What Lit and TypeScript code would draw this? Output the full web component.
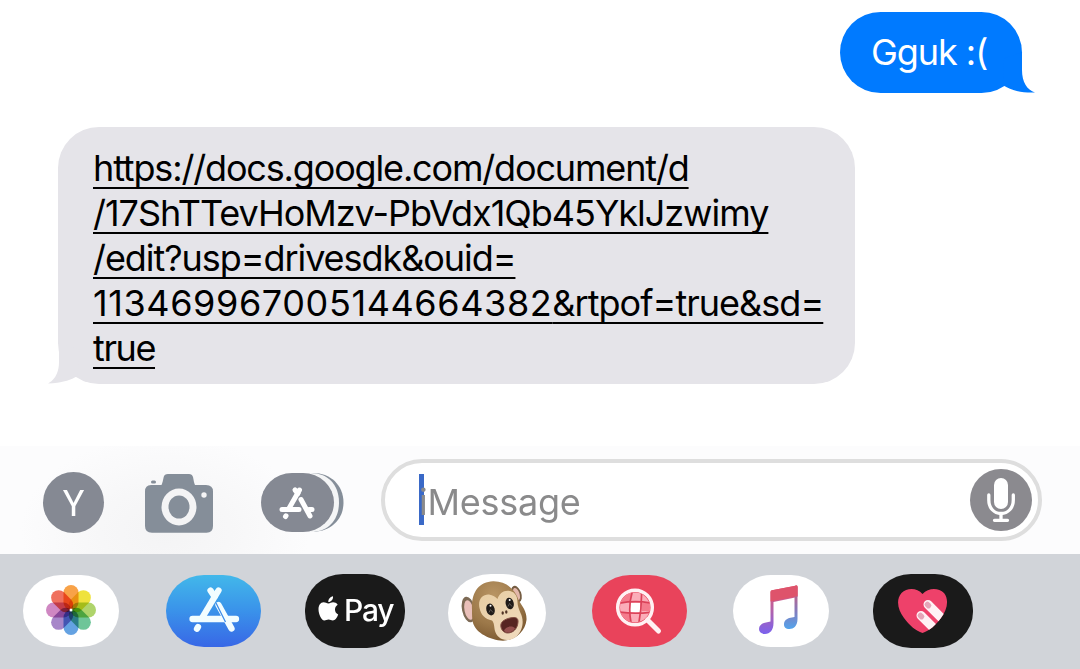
import { LitElement, html, svg, css } from 'lit';
import { customElement, property } from 'lit/decorators.js';
import { styleMap } from 'lit/directives/style-map.js';

// A stretch of text with its own tracking, in px
interface TextRun {
  text: string;
  tracking: number;
}

const SENT_LINES: TextRun[][] = [
  [{ text: 'Gguk :(', tracking: -1.05 }],
];

const LINK_LINES: TextRun[][] = [
  [{ text: 'https://docs.google.com/document/d', tracking: -1.16 }],
  [{ text: '/17ShTTevHoMzv-PbVdx1Qb45YklJzwimy', tracking: -1.03 }],
  [{ text: '/edit?usp=drivesdk&ouid=', tracking: -1.06 }],
  [
    { text: '113469967005144664382', tracking: 0.6 },
    { text: '&rtpof=true&sd=', tracking: -0.97 },
  ],
  [{ text: 'true', tracking: -1.4 }],
];

const APPS = ['photos', 'store', 'pay', 'animoji', 'images', 'music', 'touch'];

const PETALS = ['#f79a38', '#eee02c', '#a8d05e', '#62c08f', '#579adf', '#a07cc4', '#cb7dbd', '#ee6450'];

@customElement('message-bubble')
export class MessageBubble extends LitElement {
  @property({ type: Array }) lines: TextRun[][] = [];
  @property({ type: Boolean, reflect: true }) sent = false;

  static styles = css`
    :host {
      display: block;
      position: relative;
      box-sizing: border-box;
      width: 797px;
      height: 257px;
      padding: 19px 35px;
      border-radius: 41px;
      background: #e5e4e9;
      color: #000;
    }
    :host([sent]) {
      width: 182px;
      height: 81px;
      padding: 18px 31px;
      background: #007aff;
      color: #fff;
    }
    .line {
      display: block;
      height: 45px;
      line-height: 45px;
      white-space: nowrap;
    }
    .link {
      width: max-content;
      text-decoration: underline;
      text-decoration-thickness: 2px;
      text-underline-offset: 6px;
      text-decoration-skip-ink: none;
    }
    /* The tail hangs outside of the bubble's corner */
    .tail {
      position: absolute;
      bottom: 0;
      left: -10px;
      overflow: visible;
    }
    :host([sent]) .tail {
      left: auto;
      right: -13px;
    }
  `;

  private _tail() {
    return this.sent
      ? html`<svg class="tail" width="32" height="42" viewBox="0 0 32 42">
          <path d="M0 8L19 1V19C19 31 24 39 32 41.500C20 42 10 40 0.500 34.500Z" fill="#007aff" />
        </svg>`
      : html`<svg class="tail" width="32" height="42" viewBox="0 0 32 42">
          <path d="M10 1L32 8L29.500 34C21 39 12 41 0 41.500C8 37 11 29 11 20V1Z" fill="#e5e4e9" />
        </svg>`;
  }

  render() {
    return html`
      ${this.lines.map((runs) => html`
        <div class="line ${this.sent ? '' : 'link'}">${runs.map((run) => html`<span
          style=${styleMap({ letterSpacing: `${run.tracking}px` })}>${run.text}</span>`)}</div>
      `)}
      ${this._tail()}
    `;
  }
}

@customElement('drawer-app')
export class DrawerApp extends LitElement {
  @property({ reflect: true }) app = '';

  static styles = css`
    :host {
      display: block;
      box-sizing: border-box;
      width: 96px;
      height: 72px;
      border-radius: 38px / 36px;
      overflow: hidden;
      background: #fff;
    }
    :host([app='store']) {
      width: 95px;
      background: linear-gradient(#42b8ea, #3a92ea 50%, #3867e6);
    }
    :host([app='pay']),
    :host([app='touch']) {
      width: 100px;
      height: 74px;
      background: #1a1a1a;
    }
    :host([app='animoji']) {
      width: 98px;
      height: 73px;
      border-radius: 43px 43px 36px 36px / 39px 39px 34px 34px;
    }
    :host([app='images']) {
      width: 95px;
      background: #e9435b;
    }
    svg {
      display: block;
    }
    .petals rect {
      mix-blend-mode: multiply;
    }
    .pay {
      display: flex;
      align-items: center;
      height: 100%;
      padding-left: 13px;
      gap: 5px;
      color: #fff;
      font-size: 30px;
      font-weight: 500;
      letter-spacing: -1.2px;
      line-height: 72px;
    }
    .pay svg {
      margin-top: -5px;
    }
    .pay span {
      margin-top: -1px;
    }
  `;

  private _photos() {
    return html`<svg width="96" height="72" viewBox="0 0 96 72">
      <g class="petals">
        ${PETALS.map((fill, i) => svg`
          <rect x="40.500" y="10" width="15" height="25" rx="7.500" fill=${fill} fill-opacity="0.920"
            transform="rotate(${i * 45} 48 35)" />
        `)}
      </g>
      <circle cx="48" cy="35" r="1.500" fill="#fff" />
    </svg>`;
  }

  private _store() {
    return html`<svg width="96" height="72" viewBox="0 0 96 72">
      <g stroke="#f2fdff" stroke-width="6.300" stroke-linecap="round" fill="none">
        <path d="M26.500 44H70" />
        <path d="M52.500 15.500L36 43" />
        <path d="M44.500 15.500L48.500 21.500" />
        <path d="M52.500 30L65.500 53.500" />
        <path d="M32 52L31 53.800" />
      </g>
      <path d="M50 28L59.500 47" stroke="#3a8be9" stroke-width="1.200" />
    </svg>`;
  }

  private _pay() {
    return html`<div class="pay">
      <svg width="21" height="25" viewBox="0 0 21 25">
        <path d="M10.500 7.500C8.500 7.500 7.500 6.300 5.600 6.300C2.500 6.300.5 9.200.5 13.300C.5 18.300 3.500 24.500 6.400 24.500C7.900 24.500 8.700 23.500 10.600 23.500C12.500 23.500 13.200 24.500 14.800 24.500C17 24.500 19.200 21.500 20.200 18.500C18 17.500 17 15.700 17 13.500C17 11.500 18 9.800 19.700 8.700C18.500 7 16.800 6.300 15.100 6.300C13.200 6.300 12 7.500 10.500 7.500Z" fill="#fff" />
        <path d="M10.300 6C10.100 3 12.300.6 15 .2C15.400 3.200 13 5.900 10.300 6Z" fill="#fff" />
      </svg>
      <span>Pay</span>
    </div>`;
  }

  private _animoji() {
    return html`<svg width="98" height="73" viewBox="0 0 98 73">
      <defs>
        <radialGradient id="fur" cx="0.400" cy="0.250" r="0.800">
          <stop offset="0" stop-color="#b99564" />
          <stop offset="0.600" stop-color="#9c7849" />
          <stop offset="1" stop-color="#7a572f" />
        </radialGradient>
        <linearGradient id="skin" x1="0" y1="0" x2="0.600" y2="1">
          <stop offset="0" stop-color="#e8cda2" />
          <stop offset="1" stop-color="#efd9bb" />
        </linearGradient>
      </defs>
      <ellipse cx="20.500" cy="35.500" rx="6.500" ry="13" fill="#7d6a55" transform="rotate(-12 20.500 35.500)" />
      <ellipse cx="21" cy="36" rx="4.500" ry="10" fill="#e9bfb9" transform="rotate(-12 21 36)" />
      <ellipse cx="68.500" cy="20" rx="4.800" ry="8.500" fill="#755d43" transform="rotate(-20 68.500 20)" />
      <ellipse cx="68.500" cy="20" rx="3" ry="6.300" fill="#e3b7aa" transform="rotate(-20 68.500 20)" />
      <path d="M24 36C23 18 31 8 45 7.300C58 7 67 15 71 27C75 33 79 38 78.500 46C77 58 67 66.500 55 66.700C42 66 28 59 25 49C24 45 24 41 24 36Z" fill="url(#fur)" />
      <path d="M31.500 34C29.500 25 35 20 41 20.500C45 21 47.500 23 49.500 25C51 20 55 16.500 60 16.700C66 17 69.500 21 69.500 28C69.500 32 71 35 72.500 39C75 44 75.500 50 73 56C70 62 66 65.500 60 66C53 66.500 48.500 62 47 57C46 53 46.500 49 44 46.500C37 45 33 41 31.500 34Z" fill="url(#skin)" />
      <ellipse cx="42.500" cy="35.500" rx="4.200" ry="6" fill="#201b18" transform="rotate(-14 42.500 35.500)" />
      <ellipse cx="61.700" cy="29.500" rx="4" ry="5.800" fill="#201b18" transform="rotate(-14 61.700 29.500)" />
      <circle cx="42.500" cy="31.800" r="1" fill="#fff" />
      <circle cx="61.700" cy="26" r="1" fill="#fff" />
      <path d="M41 38.500L42.500 35.500L45 38.500M60 32.500L61.500 29.500L64 32.500" fill="none" stroke="#77716b" stroke-width="0.700" />
      <ellipse cx="54.700" cy="39" rx="1.200" ry="1.700" fill="#513425" />
      <ellipse cx="58.300" cy="38" rx="1.200" ry="1.700" fill="#513425" />
      <path d="M53 50C54 46 61 43.500 66 43.500C70.500 43.500 70.500 47 69.500 51C68.500 55 65 59 59.500 59C55 59 52 54 53 50Z" fill="#572522" stroke="#835044" stroke-width="1" />
      <path d="M56 56.500C58 52 65 51.500 67 54.500C65 57.500 62 58.700 59.500 58.500C57.500 58.300 56.500 57.500 56 56.500Z" fill="#95504e" />
    </svg>`;
  }

  private _images() {
    return html`<svg width="96" height="72" viewBox="0 0 96 72">
      <defs>
        <clipPath id="lens"><circle cx="43" cy="32.500" r="15" /></clipPath>
      </defs>
      <g clip-path="url(#lens)">
        <rect x="28" y="17" width="31" height="31" fill="#fbadb9" />
        <rect x="28" y="17" width="11" height="10" fill="#f47c8d" />
        <rect x="50" y="28" width="10" height="8" fill="#f47c8d" />
        <rect x="28" y="37" width="10" height="12" fill="#f47c8d" />
        <rect x="38" y="28" width="10" height="9" fill="#fff" />
        <g stroke="#db4259" stroke-width="1.700" fill="none">
          <path d="M27 28.300Q43.500 25 60 28.300M27 37Q43.500 39.500 60 37" />
          <path d="M40.500 16Q35.500 32 39.500 50M49.500 16Q50 32 46.500 50" />
        </g>
      </g>
      <circle cx="43" cy="32.500" r="17.300" fill="none" stroke="#fff1f3" stroke-width="3.500" />
      <path d="M55.500 45L66.500 56" stroke="#fff1f3" stroke-width="5" stroke-linecap="round" />
    </svg>`;
  }

  private _music() {
    return html`<svg width="96" height="72" viewBox="0 0 96 72">
      <defs>
        <linearGradient id="left" x1="0" y1="0" x2="0" y2="1">
          <stop offset="0" stop-color="#ec5266" />
          <stop offset="0.500" stop-color="#b462a8" />
          <stop offset="1" stop-color="#7b62ee" />
        </linearGradient>
        <linearGradient id="right" x1="0" y1="0" x2="0" y2="1">
          <stop offset="0" stop-color="#d7566f" />
          <stop offset="0.550" stop-color="#8878b8" />
          <stop offset="1" stop-color="#53a4ec" />
        </linearGradient>
      </defs>
      <path d="M37.500 17Q37.500 15.500 39 15.200L62.500 10.700Q64.500 10.300 64.500 12V22L40.500 27V48C40.500 55 37 59 32 59C28 59 26 56.500 26 54C26 50 29.500 48 33 47.500L37.500 46.500Z" fill="url(#left)" />
      <path d="M61.500 11L63 10.600Q64.500 10.500 64.500 12V44C64.500 51 60.500 54 56.500 54C52.500 54 51 52 51 49.500C51 45.500 54 43.500 57.500 42.800L61.500 42Z" fill="url(#right)" />
      <path d="M37.500 17Q37.500 15.500 39 15.200L62.500 10.700Q64.500 10.300 64.500 12V21L37.500 26.500Z" fill="#de536b" />
    </svg>`;
  }

  private _touch() {
    return html`<svg width="100" height="74" viewBox="0 0 100 74">
      <defs>
        <clipPath id="heart">
          <path d="M49.500 20C44 13.500 34 13.500 28.500 19C22.500 26 25 36 31 44C36 51 43 57 49.500 59C56 57 63 51 68 44C74 36 76.500 26 71 19C65.500 13.500 55.500 13.500 49.500 20Z" />
        </clipPath>
      </defs>
      <g clip-path="url(#heart)">
        <rect width="100" height="74" fill="#ee416a" />
        <g fill="#fff1f5">
          <rect x="50.500" y="26" width="9" height="40" rx="4.500" transform="rotate(-45 55 30.500)" />
          <rect x="43.500" y="37" width="9" height="40" rx="4.500" transform="rotate(-45 48 41.500)" />
        </g>
        <g fill="#e5a5b8">
          <rect x="52.200" y="27.500" width="5.500" height="7" rx="2.500" transform="rotate(-45 55 31)" />
          <rect x="45.200" y="38.500" width="5.500" height="7" rx="2.500" transform="rotate(-45 48 42)" />
        </g>
      </g>
    </svg>`;
  }

  render() {
    switch (this.app) {
      case 'photos': return this._photos();
      case 'store': return this._store();
      case 'pay': return this._pay();
      case 'animoji': return this._animoji();
      case 'images': return this._images();
      case 'music': return this._music();
      default: return this._touch();
    }
  }
}

@customElement('app-root')
export class AppRoot extends LitElement {
  static styles = css`
    :host {
      display: flex;
      flex-direction: column;
      width: 1080px;
      height: 669px;
      overflow: hidden;
      background: #fff;
      font-family: Inter, 'Liberation Sans', sans-serif;
      font-size: 36px;
    }
    .thread {
      display: flex;
      flex-direction: column;
      align-items: flex-start;
      gap: 34px;
      box-sizing: border-box;
      height: 446px;
      padding: 12px 58px 0;
    }
    .thread message-bubble[sent] {
      align-self: flex-end;
    }
    .composer {
      display: flex;
      align-items: center;
      box-sizing: border-box;
      height: 108px;
      padding: 0 38px 0 43px;
      background: radial-gradient(ellipse 145px 95px at 165px 85px, #f4f4f5, #f7f7f8 45%, #fcfcfd) #fcfcfd;
    }
    .avatar {
      width: 61px;
      height: 61px;
      margin-top: 4px;
      border-radius: 50%;
      background: #858993;
      color: #fff;
      font-family: Roboto, sans-serif;
      font-size: 36px;
      line-height: 65px;
      text-align: center;
    }
    .camera {
      margin: 6px 0 0 40px;
    }
    .apps {
      margin: 4px 0 0 47px;
    }
    .field {
      display: flex;
      align-items: center;
      box-sizing: border-box;
      width: 661px;
      height: 82px;
      margin-left: auto;
      padding: 0 6px 0 34px;
      border: 4px solid #dedede;
      border-radius: 41px;
      background: #fff;
    }
    .caret {
      width: 5px;
      height: 51px;
      margin-top: -1px;
      background: #3a69c7;
    }
    .placeholder {
      flex: 1;
      position: relative;
      margin-left: -5px;
      padding-top: 4px;
      color: #8a8a8b;
      letter-spacing: -0.25px;
      line-height: 45px;
    }
    .drawer {
      display: flex;
      align-items: center;
      box-sizing: border-box;
      height: 115px;
      padding-bottom: 2px;
      background: #d1d4d9;
    }
    .slot {
      display: flex;
      justify-content: center;
      flex: 0 0 142px;
    }
    svg {
      display: block;
    }
  `;

  render() {
    return html`
      <div class="thread">
        <message-bubble sent .lines=${SENT_LINES}></message-bubble>
        <message-bubble .lines=${LINK_LINES}></message-bubble>
      </div>
      <div class="composer">
        <div class="avatar">Y</div>
        <svg class="camera" width="70" height="60" viewBox="0 0 70 60">
          <path d="M7 12H17.500C18.500 10 19 7 19.700 4C20.200 2 21.500 1 24 1H45C47 1 48.500 2 49 4C49.700 7 50 10 51 12H62Q69 12 69 18.500V53Q69 59.700 62.500 59.700H8Q1 59.700 1 53V18.500Q1 12 7 12Z" fill="#858e99" />
          <rect x="7" y="7.500" width="5" height="3" rx="1.500" fill="#858e99" />
          <ellipse cx="35" cy="34" rx="17.500" ry="18.500" fill="#f4f4f5" />
          <ellipse cx="35" cy="34" rx="10.500" ry="11.500" fill="#858e99" />
          <circle cx="60" cy="22" r="2.700" fill="#f4f4f5" />
        </svg>
        <svg class="apps" width="83" height="61" viewBox="0 0 83 61">
          <path d="M50 1C68 0 82.500 12 82.500 30.500C82.500 49 68 60 50 60Z" fill="#858e99" />
          <path d="M50 1C66 1 78 12 78 30.500C78 49 66 60 50 60Z" fill="#f4f5f6" />
          <rect x="0" y="1" width="73" height="59" rx="31" ry="29.500" fill="#858993" />
          <g stroke="#fff" stroke-width="5" stroke-linecap="round" fill="none">
            <path d="M21 37.500H38M48 37.500H51" />
            <path d="M38.500 18L28.500 35.500" />
            <path d="M34 18L37 21.500" />
            <path d="M40 27.500L49 44" />
            <path d="M25 43.800L24.500 44.500" />
          </g>
        </svg>
        <div class="field">
          <span class="caret"></span>
          <span class="placeholder">iMessage</span>
          <svg width="62" height="62" viewBox="0 0 62 62">
            <circle cx="31" cy="31" r="31" fill="#8b8a8f" />
            <rect x="24" y="9" width="14" height="31" rx="7" fill="#fff" />
            <path d="M18.800 26V31C18.800 39 24 44.500 31 44.500C38 44.500 43.300 39 43.300 31V26M31 44.500V51M24.500 51.300H37.500" fill="none" stroke="#fff" stroke-width="3.300" stroke-linecap="round" />
          </svg>
        </div>
      </div>
      <div class="drawer">
        ${APPS.map((app) => html`<div class="slot"><drawer-app app=${app}></drawer-app></div>`)}
      </div>
    `;
  }
}
